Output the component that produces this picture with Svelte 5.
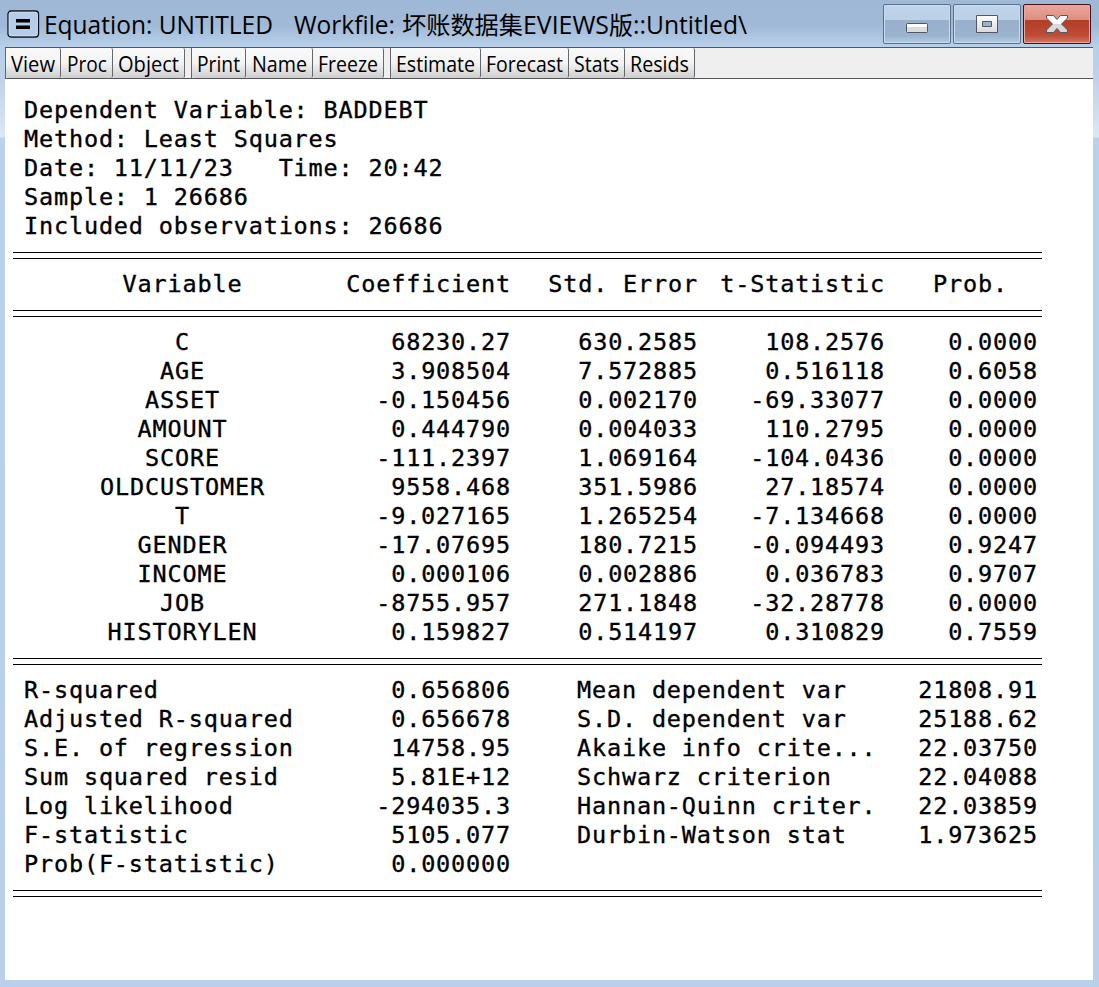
<script>
  const toolGroups = [
    [['View', 55, 44], ['Proc', 52, 40], ['Object', 72, 61]],
    [['Print', 54, 43], ['Name', 67, 55], ['Freeze', 71, 60]],
    [['Estimate', 90, 79], ['Forecast', 88, 77], ['Stats', 56, 45], ['Resids', 70, 59]]
  ];

  const info = [
    'Dependent Variable: BADDEBT',
    'Method: Least Squares',
    'Date: 11/11/23   Time: 20:42',
    'Sample: 1 26686',
    'Included observations: 26686'
  ];

  const coefficients = [
    ['C', '68230.27', '630.2585', '108.2576', '0.0000'],
    ['AGE', '3.908504', '7.572885', '0.516118', '0.6058'],
    ['ASSET', '-0.150456', '0.002170', '-69.33077', '0.0000'],
    ['AMOUNT', '0.444790', '0.004033', '110.2795', '0.0000'],
    ['SCORE', '-111.2397', '1.069164', '-104.0436', '0.0000'],
    ['OLDCUSTOMER', '9558.468', '351.5986', '27.18574', '0.0000'],
    ['T', '-9.027165', '1.265254', '-7.134668', '0.0000'],
    ['GENDER', '-17.07695', '180.7215', '-0.094493', '0.9247'],
    ['INCOME', '0.000106', '0.002886', '0.036783', '0.9707'],
    ['JOB', '-8755.957', '271.1848', '-32.28778', '0.0000'],
    ['HISTORYLEN', '0.159827', '0.514197', '0.310829', '0.7559']
  ];

  const summary = [
    ['R-squared', '0.656806', 'Mean dependent var', '21808.91'],
    ['Adjusted R-squared', '0.656678', 'S.D. dependent var', '25188.62'],
    ['S.E. of regression', '14758.95', 'Akaike info crite...', '22.03750'],
    ['Sum squared resid', '5.81E+12', 'Schwarz criterion', '22.04088'],
    ['Log likelihood', '-294035.3', 'Hannan-Quinn criter.', '22.03859'],
    ['F-statistic', '5105.077', 'Durbin-Watson stat', '1.973625'],
    ['Prob(F-statistic)', '0.000000', '', '']
  ];
</script>

{#snippet fitted(text, width, size, baseline, height)}
  <svg class="fitted" {width} {height}>
    <text x="0" y={baseline} font-size={size} textLength={width} lengthAdjust="spacingAndGlyphs">{text}</text>
  </svg>
{/snippet}

<div class="window">
  <header class="titlebar">
    <svg class="app-icon" width="33" height="28" viewBox="0 0 33 28">
      <rect x="1" y="1" width="30.5" height="26" rx="3" fill="#b5cde9" stroke="#0b1016" stroke-width="1.3" />
      <rect x="2.3" y="2.3" width="28" height="23.4" rx="2" fill="none" stroke="#c9dcf1" />
      <path d="M9 9h14v3.5H9zM9 15.5h14V19H9z" fill="#000" />
    </svg>
    <div class="title">
      {@render fitted('Equation: UNTITLED', 229, 25, 27, 36)}
      <span class="workfile">{@render fitted('Workfile:', 101, 25, 27, 36)}</span>
      <span class="path">{@render fitted('坏账数据集', 121, 24.2, 27, 36)}{@render fitted('EVIEWS', 86, 25, 27, 36)}{@render fitted('版', 24, 24.2, 27, 36)}{@render fitted('::Untitled\\', 114, 25, 27, 36)}</span>
    </div>
    <div class="controls">
      <div class="control">
        <svg width="68" height="40" viewBox="0 0 68 40">
          <rect x="23.5" y="19.5" width="21" height="9" rx="1" fill="#dcdcdc" stroke="#535666" />
          <rect x="24" y="20" width="20" height="3" fill="#fff" />
        </svg>
      </div>
      <div class="control">
        <svg width="68" height="40" viewBox="0 0 68 40">
          <defs><linearGradient id="box" x2="0" y2="1"><stop stop-color="#fff" /><stop offset="1" stop-color="#d9d9d9" /></linearGradient></defs>
          <path d="M23.5 11.5h21v17h-21zM29.5 17.5v5h9v-5z" fill="url(#box)" fill-rule="evenodd" stroke="#535666" />
        </svg>
      </div>
      <div class="control close">
        <svg width="68" height="40" viewBox="0 0 68 40">
          <defs><linearGradient id="cross" x2="0" y2="1"><stop offset=".48" stop-color="#fff" /><stop offset=".52" stop-color="#d9d9d9" /></linearGradient></defs>
          <path d="M23.5 11.5h7l3.5 4 3.5-4h7v2.5l-6 6 6 6v2.5h-7l-3.5-4-3.5 4h-7V26l6-6-6-6z" fill="url(#cross)" stroke="#535666" stroke-linejoin="round" />
        </svg>
      </div>
    </div>
  </header>

  <main class="client">
    <nav class="toolbar">
      {#each toolGroups as group}
        <div class="group">
          {#each group as [label, width, textWidth]}
            <div class="tool" style:width="{width}px">{@render fitted(label, textWidth, 21.3, 24, 29)}</div>
          {/each}
        </div>
      {/each}
    </nav>

    <section class="report">
      {#each info as line}
        <div class="line">{line}</div>
      {/each}
      <div class="rule"></div>
      <div class="row">
        <span>Variable</span><span>Coefficient</span><span>Std. Error</span><span>t-Statistic</span><span class="prob">Prob.</span>
      </div>
      <div class="rule"></div>
      {#each coefficients as row}
        <div class="row">{#each row as cell}<span>{cell}</span>{/each}</div>
      {/each}
      <div class="rule"></div>
      {#each summary as row}
        <div class="stat">{#each row as cell}<span>{cell}</span>{/each}</div>
      {/each}
      <div class="rule"></div>
    </section>
  </main>
</div>

<style>
  :global(body) { margin: 0; overflow: hidden; }
  .window {
    box-sizing: border-box;
    width: 1099px;
    height: 987px;
    padding: 0 6px 7px 5px;
    display: flex;
    flex-direction: column;
    background: linear-gradient(#9fb8d5 0, #a0b9d7 25px, #b7cfe9 46px, #bdd2ea 80px, #dce8f5 137px, #b9d1ea 138px, #bad0ea 100%);
  }
  .titlebar { height: 47px; display: flex; align-items: flex-start; flex: none; }
  .app-icon { margin: 10px 0 0 2px; flex: none; }
  .title { display: flex; margin: 7px 0 0 4px; flex: 1; }
  .fitted {
    display: block;
    flex: none;
    overflow: visible;
    font-family: "Open Sans", "Noto Sans CJK SC", sans-serif;
    fill: #000;
  }
  .workfile { margin-left: 21px; }
  .path { display: flex; margin-left: 7px; }
  .controls { display: flex; gap: 2px; margin: 4px 2px 0 0; }
  .control {
    box-sizing: border-box;
    width: 68px;
    height: 40px;
    border: 1px solid #5c708c;
    border-radius: 2px;
    box-shadow: inset 0 0 0 1px #c8dcf0;
    background: linear-gradient(#bfd4eb 0, #bcd1e6 15px, #98b0cd 15px, #9ab2cc 30px, #b1cce8 100%);
  }
  .control svg { display: block; margin: -1px; }
  .close {
    border-color: #47101b;
    box-shadow: inset 0 0 0 1px #e9a99d;
    background: linear-gradient(#eba79c 0, #dc8e80 15px, #b43d26 15px, #bd4b34 30px, #d47660 100%);
  }
  .client { flex: 1; min-height: 0; background: #fff; }
  .toolbar {
    box-sizing: border-box;
    height: 32px;
    display: flex;
    gap: 6px;
    background: #efefef;
    border-top: 1px solid #55565a;
    border-bottom: 1px solid #55565a;
  }
  .group { display: flex; border-left: 1px solid #66676a; }
  .tool {
    box-sizing: border-box;
    height: 30px;
    display: flex;
    justify-content: center;
    border-right: 1px solid #66676a;
    border-radius: 2px;
    background: linear-gradient(#fafafa 0, #f3f3f3 50%, #cecece 100%);
  }
  .report {
    width: 1029px;
    margin-left: 8px;
    padding-top: 17px;
    font: 23.5px/29px "DejaVu Sans Mono", monospace;
    letter-spacing: 0.83px;
    color: #000;
    -webkit-text-stroke: 0.35px #000;
  }
  .line { height: 29px; padding-left: 11px; white-space: pre; }
  .rule { height: 29px; display: flex; align-items: center; }
  .rule::before {
    content: "";
    width: 100%;
    height: 5px;
    border-top: 1px solid #000;
    border-bottom: 1px solid #000;
  }
  .row, .stat {
    height: 29px;
    display: grid;
    white-space: nowrap;
  }
  .row {
    grid-template-columns: 330px 168px 187px 187px 153px;
    text-align: right;
  }
  .row span:first-child { padding-left: 9px; text-align: center; }
  .row .prob { padding-right: 30px; }
  .stat { grid-template-columns: 330px 168px 375px 152px; }
  .stat span:nth-child(1) { padding-left: 11px; }
  .stat span:nth-child(even) { text-align: right; }
  .stat span:nth-child(3) { padding-left: 66px; }
</style>
